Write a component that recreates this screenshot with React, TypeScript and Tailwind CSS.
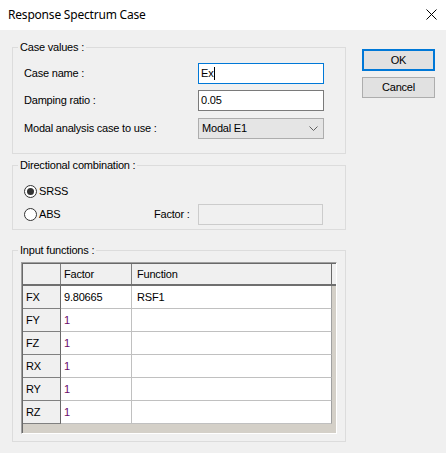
import type { ReactNode } from 'react';

const rows = [
  { axis: 'FX', factor: '9.80665', fn: 'RSF1', preset: false },
  { axis: 'FY', factor: '1', fn: '', preset: true },
  { axis: 'FZ', factor: '1', fn: '', preset: true },
  { axis: 'RX', factor: '1', fn: '', preset: true },
  { axis: 'RY', factor: '1', fn: '', preset: true },
  { axis: 'RZ', factor: '1', fn: '', preset: true },
];

const Group = ({ title, className, children }: { title: string; className: string; children: ReactNode }) => (
  <fieldset className={`border border-[#dcdcdc] ${className}`}>
    <legend className="ml-[5px] px-[2px] leading-[13px]">{title}</legend>
    {children}
  </fieldset>
);

const Radio = ({ checked, label }: { checked?: boolean; label: string }) => (
  <div className="flex items-center">
    <span className="flex h-[13px] w-[13px] items-center justify-center rounded-full border border-[#333333] bg-white">
      {checked && <span className="h-[7px] w-[7px] rounded-full bg-[#333333]" />}
    </span>
    <span className="ml-[2px]">{label}</span>
  </div>
);

const ResponseSpectrumCase = () => {
  return (
    <div className="h-[453px] w-[446px] overflow-hidden bg-[#f0f0f0] font-['Liberation_Sans',Arial,sans-serif] text-[11px] tracking-[-0.2px] text-black">
      {/* title bar */}
      <div className="flex h-[30px] items-center justify-between bg-white pl-[8px] pr-[9px]">
        <span className="font-['Noto_Sans',sans-serif] text-[12px] tracking-[-0.2px]">Response Spectrum Case</span>
        <svg width="11" height="11" viewBox="0 0 11 11" className="mt-[-1px]">
          <path d="M0.5 0.5 L10.5 10.5 M10.5 0.5 L0.5 10.5" stroke="#000" strokeWidth="1" fill="none" />
        </svg>
      </div>

      <div className="flex">
        <div className="ml-[12px] w-[334px] pt-[11px]">
          <Group title="Case values :" className="h-[113px]">
            <div className="pt-[9px]">
              <div className="flex h-[21px] items-center">
                <span className="w-[185px] pl-[11px]">Case name :</span>
                <div className="flex h-[21px] w-[126px] items-center border border-[#0078d7] bg-white pl-[2px]">
                  Ex<span className="ml-[1px] h-[13px] w-[1px] bg-black" />
                </div>
              </div>
              <div className="mt-[6px] flex h-[21px] items-center">
                <span className="w-[185px] pl-[11px]">Damping ratio :</span>
                <div className="flex h-[21px] w-[126px] items-center border border-[#7a7a7a] bg-white pl-[2px]">0.05</div>
              </div>
              <div className="mt-[7px] flex h-[21px] items-center">
                <span className="w-[185px] pl-[11px]">Modal analysis case to use :</span>
                <div className="flex h-[21px] w-[126px] items-center justify-between border border-[#adadad] bg-[#e5e5e5] pl-[3px] pr-[5px]">
                  <span>Modal E1</span>
                  <svg width="9" height="5" viewBox="0 0 9 5">
                    <path d="M0.5 0.5 L4.5 4.5 L8.5 0.5" stroke="#606060" strokeWidth="1" fill="none" />
                  </svg>
                </div>
              </div>
            </div>
          </Group>

          <Group title="Directional combination :" className="mt-[5px] h-[71px]">
            <div className="pt-[9px]">
              <div className="flex h-[20px] items-center pl-[11px]">
                <Radio checked label="SRSS" />
              </div>
              <div className="mt-[3px] flex h-[21px] items-center">
                <div className="w-[141px] pl-[11px]">
                  <Radio label="ABS" />
                </div>
                <span className="w-[44px]">Factor :</span>
                <div className="h-[21px] w-[125px] border border-[#cccccc] bg-[#f0f0f0]" />
              </div>
            </div>
          </Group>

          <Group title="Input functions :" className="mt-[14px] h-[198px]">
            <div className="pl-[8px] pt-[5px]">
              <div className="h-[172px] w-[316px] border border-[#a0a0a0] border-b-white border-r-white bg-[#d4d0c8]">
                <div className="h-full border-l border-t border-[#696969]">
                  <div className="flex h-[22px] border-b-2 border-[#6f6f6f] bg-[#f0f0f0]">
                    <div className="w-[38px] border-r border-[#808080]" />
                    <div className="flex w-[71px] items-center border-r border-[#808080] pl-[3px] pt-[1px]">Factor</div>
                    <div className="flex w-[200px] items-center border-r border-[#696969] pl-[5px] pt-[1px]">Function</div>
                  </div>
                  {rows.map((r) => (
                    <div key={r.axis} className="flex h-[23px]">
                      <div className="flex w-[38px] items-center border-b border-r border-[#808080] border-r-[#696969] bg-[#f0f0f0] pl-[3px] pt-[1px]">
                        {r.axis}
                      </div>
                      <div
                        className={`flex w-[71px] items-center border-b border-r border-[#c0c0c0] bg-white pl-[3px] pt-[1px] ${
                          r.preset ? 'text-[#6a0a6a]' : 'text-black'
                        }`}
                      >
                        {r.factor}
                      </div>
                      <div className="flex w-[200px] items-center border-b border-r border-[#c0c0c0] border-r-[#a0a0a0] bg-white pl-[5px] pt-[1px]">
                        {r.fn}
                      </div>
                    </div>
                  ))}
                </div>
              </div>
            </div>
          </Group>
        </div>

        <div className="ml-[16px] flex w-[73px] flex-col pt-[19px]">
          <button className="flex h-[22px] items-center justify-center border-2 border-[#0078d7] bg-[#e1e1e1]">OK</button>
          <button className="mt-[6px] flex h-[21px] items-center justify-center border border-[#adadad] bg-[#e1e1e1]">
            Cancel
          </button>
        </div>
      </div>
    </div>
  );
};

export default function App() {
  return <ResponseSpectrumCase />;
}
